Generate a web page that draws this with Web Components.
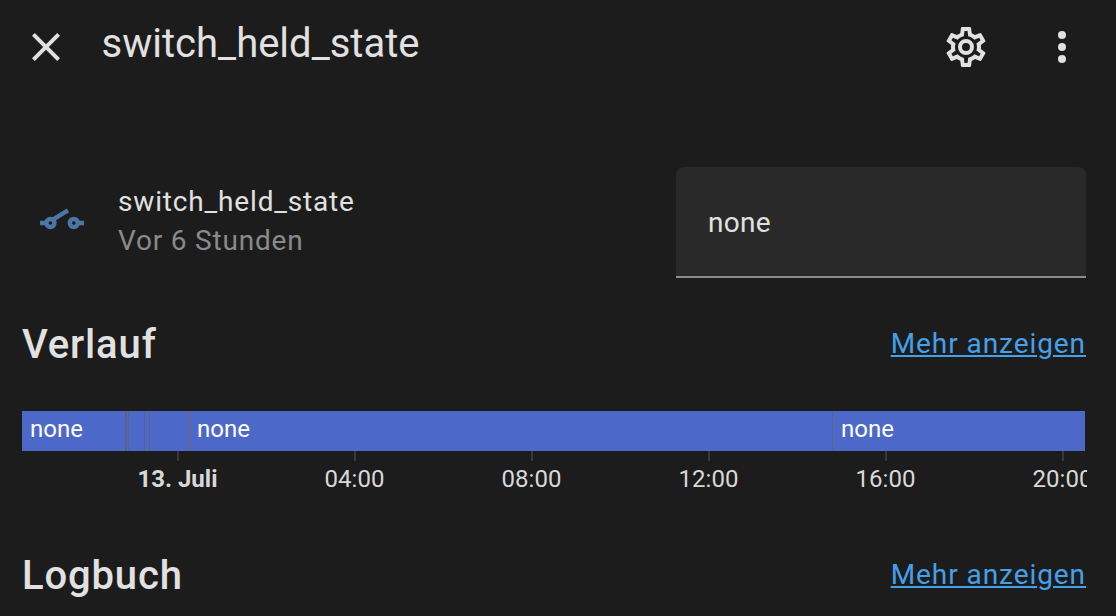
<!DOCTYPE html>
<html><head><meta charset="utf-8"><style>
html,body{margin:0;padding:0;background:#1c1c1c;height:616px;overflow:hidden}
body{font-family:Roboto,sans-serif;color:#e1e1e1}
.gap{height:73px;flex:none}
</style></head><body>
<more-info-dialog>
<dialog-header title="switch_held_state"></dialog-header>
<div class="gap"></div>
<state-row name="switch_held_state" time="Vor 6 Stunden" value="none"></state-row>
<section-head label="Verlauf" link="Mehr anzeigen" style="margin-top:36px"></section-head>
<history-chart style="margin-top:39px"></history-chart>
<section-head label="Logbuch" link="Mehr anzeigen" style="margin-top:48px"></section-head>
</more-info-dialog>
<script>
const el=(name,cls)=>customElements.define(name,cls);
const CLOSE='M19,6.41L17.59,5L12,10.59L6.41,5L5,6.41L10.59,12L5,17.59L6.41,19L12,13.41L17.59,19L19,17.59L13.41,12L19,6.41Z';
const COG='M12,8A4,4 0 0,1 16,12A4,4 0 0,1 12,16A4,4 0 0,1 8,12A4,4 0 0,1 12,8M12,10A2,2 0 0,0 10,12A2,2 0 0,0 12,14A2,2 0 0,0 14,12A2,2 0 0,0 12,10M10,22C9.75,22 9.54,21.82 9.5,21.58L9.13,18.93C8.5,18.68 7.96,18.34 7.44,17.94L4.95,18.95C4.73,19.03 4.46,18.95 4.34,18.73L2.34,15.27C2.21,15.05 2.27,14.78 2.46,14.63L4.57,12.97L4.5,12L4.57,11L2.46,9.37C2.27,9.22 2.21,8.95 2.34,8.73L4.34,5.27C4.46,5.05 4.73,4.96 4.95,5.05L7.44,6.05C7.96,5.66 8.5,5.32 9.13,5.07L9.5,2.42C9.54,2.18 9.75,2 10,2H14C14.25,2 14.46,2.18 14.5,2.42L14.87,5.07C15.5,5.32 16.04,5.66 16.56,6.05L19.05,5.05C19.27,4.96 19.54,5.05 19.66,5.27L21.66,8.73C21.79,8.95 21.73,9.22 21.54,9.37L19.43,11L19.5,12L19.43,13L21.54,14.66C21.73,14.81 21.79,15.08 21.66,15.3L19.66,18.76C19.54,18.98 19.27,19.07 19.05,18.98L16.56,17.98C16.04,18.38 15.5,18.72 14.87,18.97L14.5,21.62C14.46,21.82 14.25,22 14,22H10M11.25,4L10.88,6.61C9.68,6.86 8.62,7.5 7.85,8.39L5.44,7.35L4.69,8.65L6.8,10.2C6.4,11.37 6.4,12.64 6.8,13.8L4.68,15.36L5.43,16.66L7.86,15.62C8.63,16.5 9.68,17.14 10.87,17.38L11.24,20H12.76L13.13,17.39C14.32,17.14 15.37,16.5 16.14,15.62L18.57,16.66L19.32,15.36L17.2,13.81C17.6,12.64 17.6,11.37 17.2,10.2L19.31,8.65L18.56,7.35L16.15,8.39C15.38,7.5 14.32,6.86 13.12,6.62L12.75,4H11.25Z';
const DOTS='M12,16A2,2 0 0,1 14,18A2,2 0 0,1 12,20A2,2 0 0,1 10,18A2,2 0 0,1 12,16M12,10A2,2 0 0,1 14,12A2,2 0 0,1 12,14A2,2 0 0,1 10,12A2,2 0 0,1 12,10M12,4A2,2 0 0,1 14,6A2,2 0 0,1 12,8A2,2 0 0,1 10,6A2,2 0 0,1 12,4Z';
class Base extends HTMLElement{
  render(html){this.attachShadow({mode:'open'}).innerHTML=html}
}
el('more-info-dialog',class extends Base{constructor(){super();this.render(`<style>:host{display:flex;flex-direction:column;width:1116px;height:616px;overflow:hidden;box-sizing:border-box;background:#1c1c1c}</style><slot></slot>`)}});
el('mdi-icon',class extends Base{connectedCallback(){if(this.shadowRoot)return;this.render(`<style>:host{display:block;width:48px;height:48px;flex:none}svg{display:block;width:48px;height:48px;fill:currentColor}</style><svg viewBox="0 0 24 24"><path d="${this.getAttribute('d')}"/></svg>`)}});
el('dialog-header',class extends Base{connectedCallback(){this.render(`<style>
:host{display:flex;align-items:center;height:94px;box-sizing:border-box;padding:0 30px 0 22px;color:#e1e1e1;flex:none}
.t{font-size:40px;line-height:44px;margin:-6px 0 0 31.6px;flex:1;white-space:nowrap}
.g{margin-right:48px}
</style><mdi-icon d="${CLOSE}"></mdi-icon><div class="t">${this.getAttribute('title')}</div><mdi-icon class="g" d="${COG}"></mdi-icon><mdi-icon d="${DOTS}"></mdi-icon>`)}});
el('state-row',class extends Base{connectedCallback(){this.render(`<style>
:host{display:flex;align-items:center;height:111px;box-sizing:border-box;padding:0 30px 0 38px;flex:none}
svg{width:48px;height:48px;flex:none;display:block;margin-top:1px}
.info{flex:1;margin-left:32px;margin-top:-4px}
.n{font-size:28px;line-height:39px;letter-spacing:.84px;color:#e1e1e1;white-space:nowrap}
.s{font-size:28px;line-height:39px;letter-spacing:.8px;color:#8a8a8a;white-space:nowrap}
state-field{flex:none}
</style>
<svg viewBox="0 0 24 24" fill="none" stroke="#4c76a8" stroke-width="2.2"><path d="M1,12H4M20,12H23M7.6,10.2L15,5.7"/><circle cx="6.2" cy="12" r="2"/><circle cx="17.9" cy="12" r="2"/></svg>
<div class="info"><div class="n">${this.getAttribute('name')}</div><div class="s">${this.getAttribute('time')}</div></div>
<state-field value="${this.getAttribute('value')}"></state-field>`)}});
el('state-field',class extends Base{connectedCallback(){this.render(`<style>
:host{display:flex;align-items:center;width:410px;height:111px;box-sizing:border-box;padding:2px 32px 0;background:#292929;border-bottom:2px solid #8c8c8c;border-radius:8px 8px 0 0;font-size:28px;letter-spacing:.25px;color:#e1e1e1}
</style>${this.getAttribute('value')}`)}});
el('section-head',class extends Base{connectedCallback(){this.render(`<style>
:host{display:flex;align-items:center;justify-content:space-between;height:58px;padding:0 30px 0 22px;flex:none}
h2{margin:0;font-size:40px;font-weight:500;letter-spacing:.85px;color:#e1e1e1;padding-top:2px}
a{font-size:28px;letter-spacing:.93px;color:#45a0e8;text-decoration:underline;text-underline-offset:2px;text-decoration-thickness:1.5px}
</style><h2>${this.getAttribute('label')}</h2><a href="#">${this.getAttribute('link')}</a>`)}});
el('history-chart',class extends Base{connectedCallback(){
 const segs=[[103,'none'],[2,'',1],[1,''],[1,'',1],[15,''],[1,'',1],[4,''],[1,'',1],[38,''],[1,'',2],[643,'none'],[1,'',1],[0,'none']];
 const sep=['','#5b6284','#8a5a66'];
 const bar=segs.map(([w,t,s])=>`<div class="seg" style="${w?`flex:0 0 ${w}px`:'flex:1'};${s?`background:${sep[s]}`:''}">${t}</div>`).join('');
 const ticks=[['13. Juli',1],['04:00'],['08:00'],['12:00'],['16:00'],['20:00']].map(([t,b])=>`<div class="tick"><i></i><span class="${b?'b':''}">${t}</span></div>`).join('');
 this.render(`<style>
:host{display:block;margin:0 31px 0 22px;flex:none}
.bar{display:flex;height:40px;background:#4c68c9}
.seg{font-size:24px;line-height:36px;color:#fff;white-space:nowrap;overflow:hidden;text-indent:8px}
.axis{display:flex;overflow:hidden;padding-left:67px;height:46px;width:1065px;box-sizing:border-box}
.tick{flex:0 0 177px;display:flex;flex-direction:column;align-items:center;font-size:24px;color:#d8d8d8}
i{display:block;width:2px;height:10px;background:#3a3a3a;flex:none}
span{line-height:36px;white-space:nowrap}
.b{font-weight:700}
</style><div class="bar">${bar}</div><div class="axis">${ticks}</div>`)}});
</script>
</body></html>
